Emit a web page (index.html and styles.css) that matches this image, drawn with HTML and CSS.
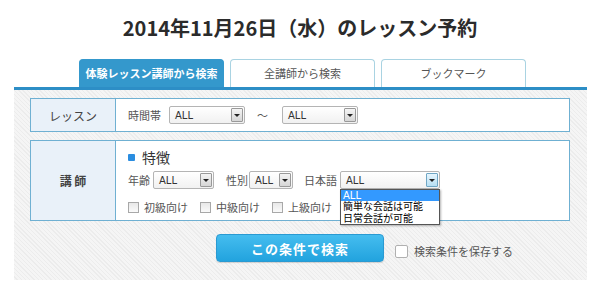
FILE: index.html
```html
<!DOCTYPE html>
<html lang="ja">
<head>
  <meta charset="UTF-8">
  <title>レッスン予約</title>
  <link rel="stylesheet" href="styles.css">
</head>
<body>
  <h1 class="title">2014年11月26日（水）のレッスン予約</h1>

  <div class="tabs">
    <div class="tab tab-active">体験レッスン講師から検索</div>
    <div class="tab">全講師から検索</div>
    <div class="tab">ブックマーク</div>
  </div>

  <div class="panel">
    <!-- lesson row -->
    <div class="box box-lesson">
      <div class="box-head">レッスン</div>
      <div class="box-body">
        <div class="line">
          <span class="label label-time">時間帯</span>
          <div class="select select-time"><span>ALL</span><i class="arrow"></i></div>
          <span class="tilde">～</span>
          <div class="select select-time"><span>ALL</span><i class="arrow"></i></div>
        </div>
      </div>
    </div>

    <!-- teacher row -->
    <div class="box box-teacher">
      <div class="box-head head-teacher">講 師</div>
      <div class="box-body body-teacher">
        <div class="feature"><i class="mark"></i>特徴</div>
        <div class="line">
          <span class="label">年齢</span>
          <div class="select select-age"><span>ALL</span><i class="arrow"></i></div>
          <span class="label label-sex">性別</span>
          <div class="select select-sex"><span>ALL</span><i class="arrow"></i></div>
          <span class="label label-lang">日本語</span>
          <div class="select select-lang">
            <span>ALL</span><i class="arrow arrow-on"></i>
            <ul class="dropdown">
              <li class="picked">ALL</li>
              <li>簡単な会話は可能</li>
              <li>日常会話が可能</li>
            </ul>
          </div>
        </div>
        <div class="line checks">
          <label class="check"><i class="box-mini"></i>初級向け</label>
          <label class="check"><i class="box-mini"></i>中級向け</label>
          <label class="check"><i class="box-mini"></i>上級向け</label>
        </div>
      </div>
    </div>

    <div class="actions">
      <button class="btn-search">この条件で検索</button>
      <label class="save"><i class="box-save"></i>検索条件を保存する</label>
    </div>
  </div>
</body>
</html>
```

FILE: styles.css
```css
body{
  margin: 0;
  background: #fff;
  font-family: "Noto Sans CJK JP", "Liberation Sans", sans-serif;
  color: #333;
}
.title{
  margin: 0;
  padding-top: 13px;
  font-size: 20px;
  line-height: 30px;
  text-align: center;
  font-weight: bold;
  color: #2b2b2b;
}
.tabs{
  display: flex;
  gap: 6px;
  margin: 16px 0 0 79px;
}
.tab{
  width: 143px;
  height: 27px;
  line-height: 27px;
  text-align: center;
  font-size: 11px;
  color: #555;
  background: #fff;
  border: 1px solid #a9d3e2;
  border-bottom: none;
  border-radius: 4px 4px 0 0;
}
.tab-active{
  background: #3498cc;
  border-color: #3498cc;
  color: #fff;
  font-weight: bold;
}
.panel{
  margin: 0 13px 0 14px;
  height: 182px;
  border-top: 3px solid #2d8ec6;
  padding: 8px 17px 0 16px;
  background: repeating-linear-gradient(45deg, #f5f5f5 0 2px, #ececec 2px 3px);
}
.box{
  display: flex;
  background: #fff;
  border: 1px solid #6fb0d2;
}
.box-lesson{
  height: 32px;
}
.box-teacher{
  margin-top: 8px;
  height: 79px;
}
.box-head{
  width: 84px;
  border-right: 1px solid #6fb0d2;
  background: #e9f1f9;
  display: flex;
  align-items: center;
  justify-content: center;
  font-size: 12px;
  color: #444;
}
.head-teacher{
  font-weight: bold;
}
.box-body{
  flex: 1;
  padding-left: 12px;
  display: flex;
  flex-direction: column;
  justify-content: center;
}
.body-teacher{
  justify-content: flex-start;
  padding-top: 8px;
}
.line{
  display: flex;
  align-items: center;
  font-size: 11px;
}
.label{
  color: #555;
  margin-right: 3px;
}
.label-time{
  margin-right: 8px;
}
.label-sex{
  margin-left: 12px;
  margin-right: 1px;
}
.label-lang{
  margin-left: 11px;
}
.tilde{
  margin: 0 14px 0 12px;
  color: #555;
}
.select{
  position: relative;
  height: 16px;
  display: flex;
  align-items: center;
  border: 1px solid #b4b4b4;
  border-radius: 2px;
  background: linear-gradient(#fff, #f1f1f1);
  font-family: "DejaVu Sans", sans-serif;
  font-size: 10px;
  color: #333;
}
.select span{
  flex: 1;
  padding-left: 5px;
}
.select-time{ width: 74px; }
.select-age{ width: 59px; }
.select-sex{ width: 42px; }
.select-lang{ width: 98px; }
.arrow{
  width: 12px;
  height: 14px;
  margin-right: 1px;
  border: 1px solid #999;
  border-radius: 1px;
  background: linear-gradient(#f4f4f4, #d6d6d6);
  position: relative;
  box-sizing: border-box;
}
.arrow::after{
  content: "";
  position: absolute;
  left: 2px;
  top: 5px;
  border-left: 3px solid transparent;
  border-right: 3px solid transparent;
  border-top: 3px solid #222;
}
.arrow-on{
  border-color: #6fa6c4;
  background: linear-gradient(#e6f5fd, #b7dff3);
}
.dropdown{
  position: absolute;
  top: 17px;
  left: -1px;
  width: 98px;
  margin: 0;
  padding: 0;
  list-style: none;
  background: #fff;
  border: 1px solid #555;
  box-shadow: 1px 1px 2px rgba(0,0,0,0.3);
  font-family: "Liberation Sans", "Noto Sans CJK JP", sans-serif;
  font-size: 10px;
  line-height: 11.4px;
  color: #000;
  z-index: 2;
}
.dropdown li{
  padding-left: 2px;
}
.dropdown .picked{
  background: #3399ff;
  color: #fff;
  font-family: "DejaVu Sans", sans-serif;
}
.feature{
  display: flex;
  align-items: center;
  font-size: 14px;
  color: #333;
  height: 16px;
  margin-bottom: 6px;
}
.mark{
  width: 7px;
  height: 7px;
  background: #2a8de0;
  border-radius: 1px;
  margin-right: 7px;
}
.checks{
  margin-top: 10px;
  color: #555;
}
.check{
  display: flex;
  align-items: center;
  margin-right: 12px;
}
.box-mini{
  width: 9px;
  height: 9px;
  border: 1px solid #a8a8a8;
  background: linear-gradient(#e8e8e8, #fafafa);
  margin-right: 5px;
}
.actions{
  display: grid;
  grid-template-columns: 1fr auto 1fr;
  align-items: center;
  margin-top: 13px;
}
.btn-search{
  grid-column: 2;
  width: 168px;
  height: 28px;
  border: 1px solid #2a9ad2;
  border-radius: 4px;
  background: linear-gradient(#45bdef, #22a3de);
  color: #fff;
  font-family: "Noto Sans CJK JP", sans-serif;
  font-weight: bold;
  font-size: 13px;
  letter-spacing: 1px;
  box-shadow: 0 1px 1px rgba(0,0,0,0.15);
}
.save{
  display: flex;
  align-items: center;
  margin: 6px 0 0 11px;
  font-size: 11px;
  color: #555;
}
.box-save{
  width: 11px;
  height: 11px;
  border: 1px solid #b0b0b0;
  border-radius: 2px;
  background: #fff;
  margin-right: 6px;
}
```
